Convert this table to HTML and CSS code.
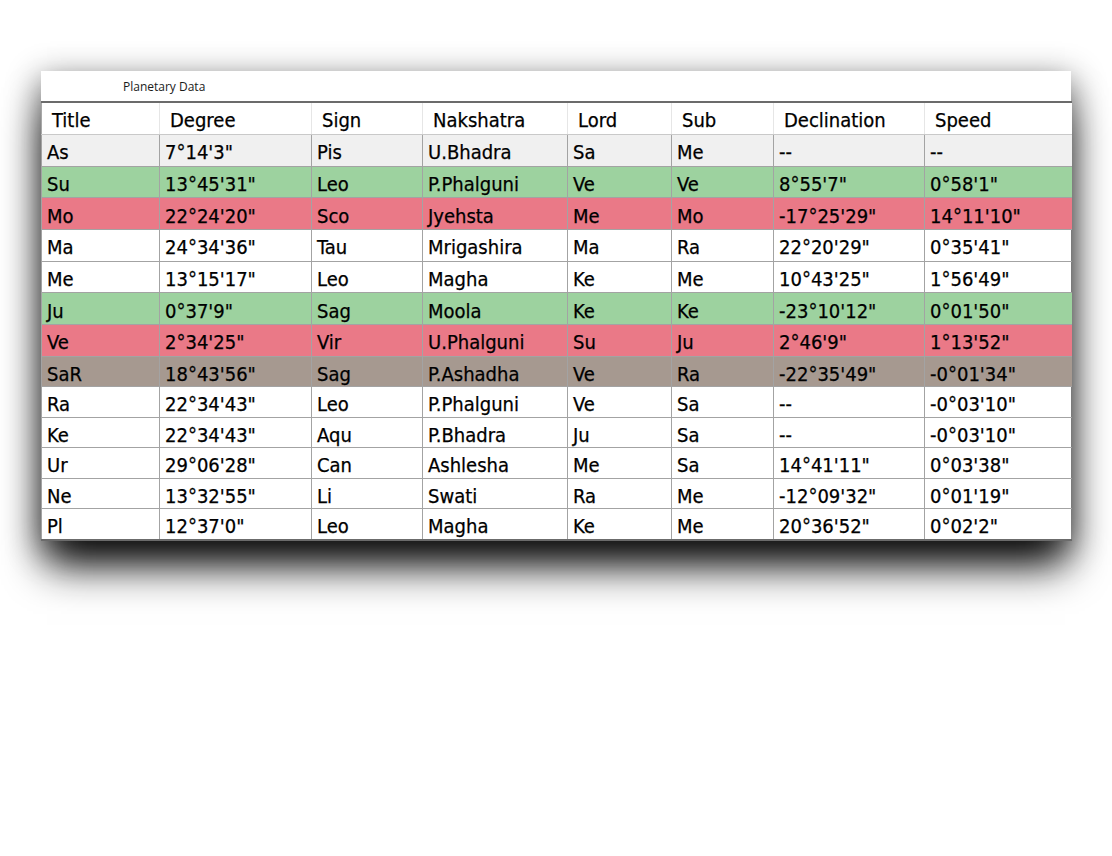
FILE: index.html
```html
<!DOCTYPE html>
<html>
<head>
<meta charset="utf-8">
<title>Planetary Data</title>
<link rel="stylesheet" href="styles.css">
</head>
<body>
<div class="window">
  <div class="titlebar">Planetary Data</div>
  <table class="grid">
    <colgroup>
      <col class="c-title"><col class="c-degree"><col class="c-sign"><col class="c-nak">
      <col class="c-lord"><col class="c-sub"><col class="c-decl"><col class="c-speed">
    </colgroup>
    <thead>
      <tr><th>Title</th><th>Degree</th><th>Sign</th><th>Nakshatra</th><th>Lord</th><th>Sub</th><th>Declination</th><th>Speed</th></tr>
    </thead>
    <tbody>
      <tr class="tall asc"><td>As</td><td>7°14'3"</td><td>Pis</td><td>U.Bhadra</td><td>Sa</td><td>Me</td><td>--</td><td>--</td></tr>
      <tr class="tall good"><td>Su</td><td>13°45'31"</td><td>Leo</td><td>P.Phalguni</td><td>Ve</td><td>Ve</td><td>8°55'7"</td><td>0°58'1"</td></tr>
      <tr class="tall bad"><td>Mo</td><td>22°24'20"</td><td>Sco</td><td>Jyehsta</td><td>Me</td><td>Mo</td><td>-17°25'29"</td><td>14°11'10"</td></tr>
      <tr class="tall"><td>Ma</td><td>24°34'36"</td><td>Tau</td><td>Mrigashira</td><td>Ma</td><td>Ra</td><td>22°20'29"</td><td>0°35'41"</td></tr>
      <tr class="tall"><td>Me</td><td>13°15'17"</td><td>Leo</td><td>Magha</td><td>Ke</td><td>Me</td><td>10°43'25"</td><td>1°56'49"</td></tr>
      <tr class="tall good"><td>Ju</td><td>0°37'9"</td><td>Sag</td><td>Moola</td><td>Ke</td><td>Ke</td><td>-23°10'12"</td><td>0°01'50"</td></tr>
      <tr class="tall bad"><td>Ve</td><td>2°34'25"</td><td>Vir</td><td>U.Phalguni</td><td>Su</td><td>Ju</td><td>2°46'9"</td><td>1°13'52"</td></tr>
      <tr class="retro"><td>SaR</td><td>18°43'56"</td><td>Sag</td><td>P.Ashadha</td><td>Ve</td><td>Ra</td><td>-22°35'49"</td><td>-0°01'34"</td></tr>
      <tr><td>Ra</td><td>22°34'43"</td><td>Leo</td><td>P.Phalguni</td><td>Ve</td><td>Sa</td><td>--</td><td>-0°03'10"</td></tr>
      <tr><td>Ke</td><td>22°34'43"</td><td>Aqu</td><td>P.Bhadra</td><td>Ju</td><td>Sa</td><td>--</td><td>-0°03'10"</td></tr>
      <tr><td>Ur</td><td>29°06'28"</td><td>Can</td><td>Ashlesha</td><td>Me</td><td>Sa</td><td>14°41'11"</td><td>0°03'38"</td></tr>
      <tr><td>Ne</td><td>13°32'55"</td><td>Li</td><td>Swati</td><td>Ra</td><td>Me</td><td>-12°09'32"</td><td>0°01'19"</td></tr>
      <tr><td>Pl</td><td>12°37'0"</td><td>Leo</td><td>Magha</td><td>Ke</td><td>Me</td><td>20°36'52"</td><td>0°02'2"</td></tr>
    </tbody>
  </table>
</div>
</body>
</html>
```

FILE: styles.css
```css
html, body {
  margin: 0;
  padding: 0;
  background: #ffffff;
}

body {
  box-sizing: border-box;
  min-height: 856px;
  padding: 71px 0 0 41px;
  font-family: "DejaVu Sans Condensed", "DejaVu Sans", sans-serif;
}

.window {
  width: 1030px;
  background: #ffffff;
  box-shadow: 0 30px 40px -6px rgba(0, 0, 0, 0.95), 0 8px 30px 2px rgba(0, 0, 0, 0.45);
}

.titlebar {
  height: 30px;
  line-height: 31px;
  padding-left: 82px;
  font-family: "Open Sans", "Noto Sans", sans-serif;
  font-size: 12px;
  color: #1a1a1a;
}

.grid {
  width: 1030px;
  table-layout: fixed;
  border-collapse: collapse;
  border-top: 2px solid #6b6b6b;
  border-bottom: 2px solid #6b6b6b;
  font-size: 20px;
  color: #000;
  -webkit-text-stroke: 0.25px #000;
}

.c-title { width: 118px; }
.c-degree { width: 152px; }
.c-sign { width: 111px; }
.c-nak { width: 145px; }
.c-lord { width: 104px; }
.c-sub { width: 102px; }
.c-decl { width: 151px; }
.c-speed { width: 147px; }

.grid th {
  height: 29px;
  padding: 2px 0 0 10px;
  text-align: left;
  font-weight: normal;
  background: #ffffff;
  border-left: 1px solid #e6e6e6;
  border-bottom: 1px solid #c9c9c9;
  white-space: nowrap;
}

.grid th:first-child {
  border-left: 1px solid #a8a8a8;
}

.grid td {
  height: 30px;
  padding: 4px 0 0 5px;
  border: 1px solid #a3a3a3;
  border-right: 0;
  white-space: nowrap;
}

.grid tr.tall td {
  height: 26.7px;
}

.grid tbody tr:not(.tall) td {
  height: 25.5px;
}

.grid tr.asc td { background: #f0f0f0; }
.grid tr.good td { background: #9dd29f; }
.grid tr.bad td { background: #ea7987; }
.grid tr.retro td { background: #a69990; }
```
